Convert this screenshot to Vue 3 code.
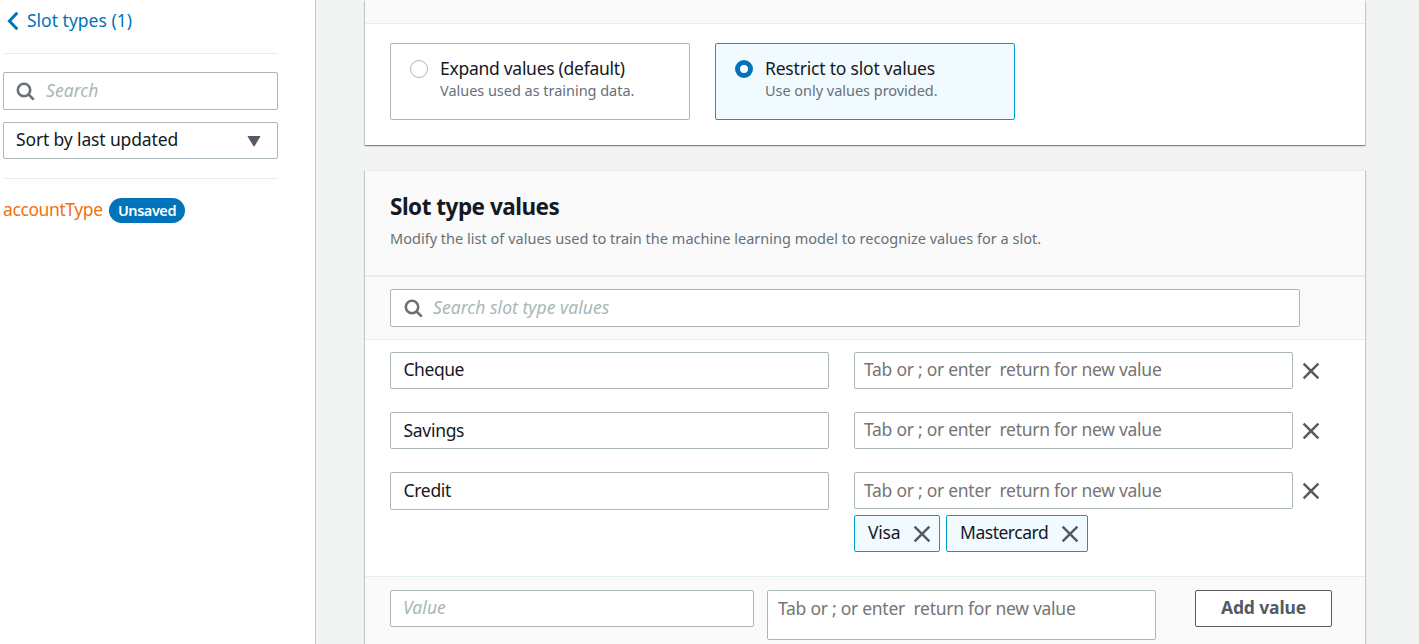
<script setup>
import { ref } from 'vue'

const hint = 'Tab or ; or enter  return for new value'
const options = [
  { id: 'expand', title: 'Expand values (default)', note: 'Values used as training data.' },
  { id: 'restrict', title: 'Restrict to slot values', note: 'Use only values provided.' },
]
const selected = ref('restrict')
const rows = [
  { id: 'cheque', value: 'Cheque', synonyms: [] },
  { id: 'savings', value: 'Savings', synonyms: [] },
  { id: 'credit', value: 'Credit', synonyms: ['Visa', 'Mastercard'] },
]
</script>

<template>
  <div class="page">
    <aside class="sidebar">
      <a class="back">
        <svg class="chevron" width="12" height="20" viewBox="0 0 12 20"><path d="M10.300 1.800 2.400 10l7.900 8.200" /></svg>
        <span>Slot types (1)</span>
      </a>
      <div class="side-search field">
        <svg class="glass" width="20" height="20" viewBox="0 0 20 20"><circle cx="8" cy="8" r="6.200" /><path d="m12.300 12.300 5.500 5.300" /></svg>
        <span class="ghost">Search</span>
      </div>
      <div class="sort field">
        <span class="sort-label">Sort by last updated</span>
        <svg width="14" height="12" viewBox="0 0 14 12"><path class="caret" d="M1 1h12q.6 0 .2.700L7.800 10.700q-.8 1-1.600 0L.8 1.700Q.4 1 1 1z" /></svg>
      </div>
      <div class="item">
        <span class="account">accountType</span>
        <span class="badge"><span>Unsaved</span></span>
      </div>
    </aside>

    <main class="content">
      <section class="panel resolution">
        <header class="resolution-head"></header>
        <div class="options">
          <div
            v-for="o in options"
            :key="o.id"
            class="option"
            :class="[o.id, { active: selected === o.id }]"
            @click="selected = o.id"
          >
            <span class="radio"></span>
            <div>
              <div class="option-title"><span>{{ o.title }}</span></div>
              <div class="option-note"><span>{{ o.note }}</span></div>
            </div>
          </div>
        </div>
      </section>

      <section class="panel values">
        <header class="values-head">
          <h2><span>Slot type values</span></h2>
          <p><span>Modify the list of values used to train the machine learning model to recognize values for a slot.</span></p>
        </header>
        <div class="filter">
          <div class="field filter-box">
            <svg class="glass" width="20" height="20" viewBox="0 0 20 20"><circle cx="8" cy="8" r="6.200" /><path d="m12.300 12.300 5.500 5.300" /></svg>
            <span class="ghost">Search slot type values</span>
          </div>
        </div>
        <div class="rows">
          <div v-for="r in rows" :key="r.id" class="row" :class="r.id">
            <div class="field value"><span>{{ r.value }}</span></div>
            <div class="synonyms">
              <div class="field hint"><span>{{ hint }}</span></div>
              <div v-if="r.synonyms.length" class="chips">
                <div v-for="s in r.synonyms" :key="s" class="chip">
                  <span>{{ s }}</span>
                  <svg class="cross" width="18" height="18" viewBox="0 0 18 18"><path d="m1.600 1.600 14.800 14.800m0-14.800L1.600 16.400" /></svg>
                </div>
              </div>
            </div>
            <svg class="cross remove" width="18" height="18" viewBox="0 0 18 18"><path d="m1.600 1.600 14.800 14.800m0-14.800L1.600 16.400" /></svg>
          </div>
        </div>
        <footer class="adder">
          <div class="field new-value"><span class="ghost">Value</span></div>
          <div class="field hint new-synonym"><span>{{ hint }}</span></div>
          <button class="add"><span>Add value</span></button>
        </footer>
      </section>
    </main>
  </div>
</template>

<style>
body {
  background: #f2f3f3;
  overflow: hidden;
}
</style>

<style scoped>
.page {
  display: flex;
  width: 1419px;
  height: 644px;
  overflow: hidden;
  background: #f2f3f3;
  color: #16191f;
  font-family: 'Noto Sans', 'Open Sans', sans-serif;
  font-size: 17.5px;
  line-height: 24px;
  white-space: pre;
}
.page * {
  box-sizing: border-box;
}
.sidebar {
  flex: none;
  width: 316px;
  padding: 0 37px 0 3px;
  background: #fff;
  border-right: 1px solid #c1c7c9;
}
.back {
  display: flex;
  align-items: center;
  height: 54px;
  padding: 0 0 12px 4px;
  gap: 8px;
  color: #0073bb;
  border-bottom: 1px solid #eaeded;
}
.chevron {
  fill: none;
  stroke: #0073bb;
  stroke-width: 3;
}
.field {
  display: flex;
  align-items: center;
  height: 37px;
  background: #fff;
  border: 1px solid #aab7b8;
  border-radius: 2px;
}
.back span,
.field > span,
.badge span,
.chip span {
  padding-bottom: 2px;
}
.glass {
  flex: none;
  fill: none;
  stroke: #687078;
  stroke-width: 2.6;
}
.ghost {
  color: #aab7b8;
  font-style: italic;
  letter-spacing: 0.04px;
}
.side-search {
  height: 38px;
  margin-top: 18px;
  padding-left: 12px;
  gap: 10px;
}
.side-search svg,
.filter-box svg {
  margin-top: 1px;
}
.sort {
  justify-content: space-between;
  margin-top: 12px;
  padding: 0 16px 2px 12px;
}
.sort-label {
  letter-spacing: -0.14px;
}
.sort svg {
  margin-top: 3px;
}
.caret {
  fill: #545b64;
}
.item {
  display: flex;
  align-items: center;
  height: 64px;
  margin-top: 19px;
  border-top: 1px solid #eaeded;
  color: #ec7211;
}
.account {
  width: 106px;
  margin-top: -4px;
  letter-spacing: -0.4px;
}
.badge {
  display: flex;
  align-items: center;
  justify-content: center;
  width: 76px;
  height: 25px;
  border-radius: 13px;
  background: #0073bb;
  color: #fff;
  font-size: 14.5px;
  font-weight: 600;
  letter-spacing: -0.45px;
}
.content {
  flex: none;
  width: 1000px;
  margin-left: 49px;
}
.panel {
  border-top: 1px solid #eaeded;
  background: #fff;
  box-shadow: 0 1px 1px 0 rgba(0, 28, 36, 0.3), 1px 1px 1px 0 rgba(0, 28, 36, 0.15),
    -1px 1px 1px 0 rgba(0, 28, 36, 0.15);
}
.resolution {
  height: 145px;
  border-top: 0;
}
.resolution-head {
  height: 24px;
  background: #fafafa;
  border-bottom: 1px solid #eaeded;
}
.options {
  display: flex;
  gap: 25px;
  padding: 19px 25px;
}
.option {
  display: flex;
  width: 300px;
  height: 77px;
  padding: 12px 18px 0 19px;
  gap: 12px;
  border: 1px solid #aab7b8;
  border-radius: 2px;
}
.option.active {
  background: #f1faff;
  border-color: #00a1c9;
}
.radio {
  flex: none;
  width: 18px;
  height: 18px;
  margin-top: 4px;
  border: 1px solid #aab7b8;
  border-radius: 50%;
  background: #fff;
}
.active .radio {
  border: 5.500px solid #0073bb;
}
.option-title {
  letter-spacing: -0.28px;
}
.restrict .option-title {
  letter-spacing: -0.2px;
}
.option-note {
  margin-top: -1px;
  color: #687078;
  font-size: 14.5px;
  line-height: 22px;
  letter-spacing: -0.03px;
}
.values {
  height: 500px;
  margin-top: 25px;
}
.values-head {
  height: 106px;
  padding: 20px 25px 0;
  background: #fafafa;
  border-bottom: 2px solid #eaeded;
}
h2 {
  margin: 0;
  font-size: 22.5px;
  line-height: 32px;
  font-weight: 700;
  letter-spacing: -0.5px;
}
p {
  margin: 4px 0 0;
  color: #687078;
  font-size: 14.5px;
  line-height: 22px;
  letter-spacing: 0.015px;
}
.filter {
  height: 63px;
  padding: 12px 65px 12px 25px;
  background: #fafafa;
  border-bottom: 1px solid #eaeded;
}
.filter-box {
  height: 38px;
  padding-left: 13px;
  gap: 9px;
}
.rows {
  height: 236px;
  padding: 12px 25px 0;
}
.row {
  display: flex;
  align-items: flex-start;
  height: 60px;
}
.value {
  width: 439px;
  padding: 0 12.500px 1px;
  letter-spacing: -0.3px;
}
.cheque .value {
  letter-spacing: -0.45px;
}
.credit .value {
  height: 38px;
}
.savings .value {
  padding-top: 1px;
  padding-bottom: 0;
}
.synonyms {
  width: 439px;
  margin-left: 25px;
}
.hint {
  padding: 0 9px 1px;
  color: #757575;
  letter-spacing: -0.27px;
}
.credit .hint {
  padding-top: 1px;
  padding-bottom: 0;
}
.cross {
  flex: none;
  fill: none;
  stroke: #545b64;
  stroke-width: 2.5;
}
.remove {
  margin: 10px 0 0 9px;
}
.chips {
  display: flex;
  gap: 6px;
  margin-top: 6px;
}
.chip {
  display: flex;
  align-items: center;
  justify-content: space-between;
  height: 37px;
  padding: 0 8px 0 13px;
  border: 1px solid #00a1c9;
  border-radius: 2px;
  background: #f1faff;
  letter-spacing: -0.48px;
}
.chip:first-child {
  width: 86px;
  letter-spacing: -0.2px;
}
.chip:last-child {
  width: 142px;
}
.chip span {
  margin-top: -2px;
}
.adder {
  display: flex;
  align-items: flex-start;
  height: 94px;
  padding: 13px 25px 0;
  border-top: 1px solid #eaeded;
  background: #fafafa;
}
.new-value {
  width: 364px;
  padding: 0 12px 1px;
}
.new-synonym {
  align-items: flex-start;
  width: 389px;
  height: 50px;
  margin-left: 13px;
  padding: 5px 10px 0;
}
.add {
  width: 137px;
  height: 37px;
  margin-left: 39px;
  padding: 0 0 4px;
  border: 1px solid #545b64;
  border-radius: 2px;
  background: #fff;
  color: #545b64;
  font: inherit;
  font-weight: 700;
  letter-spacing: -0.12px;
}
</style>
